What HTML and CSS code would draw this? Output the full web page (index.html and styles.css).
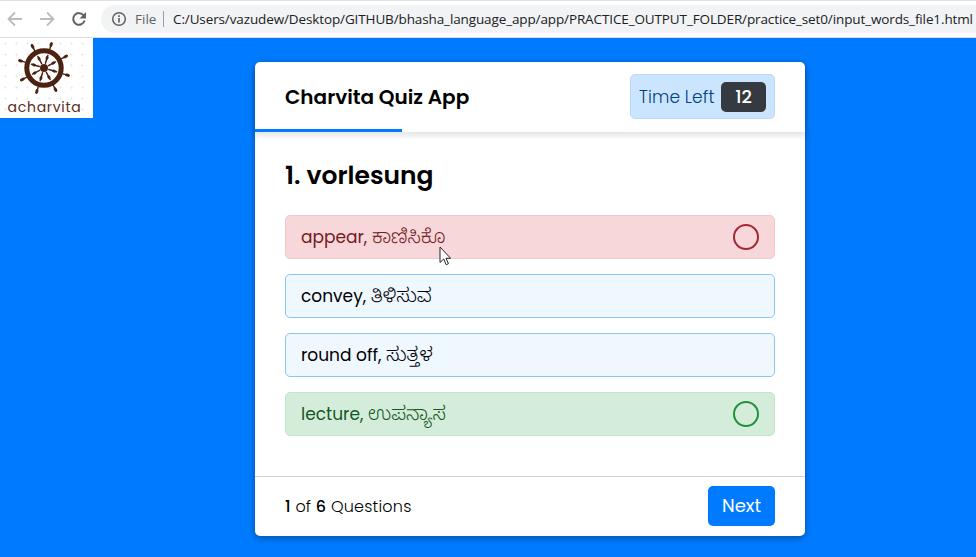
FILE: index.html
```html
<!DOCTYPE html>
<html lang="en">
<head>
<meta charset="utf-8">
<title>Charvita Quiz App</title>
<link rel="stylesheet" href="styles.css">
</head>
<body>
<header class="browser">
  <svg class="nav" viewBox="0 0 101 36" fill="none" stroke-width="1.8">
    <path stroke="#babcbe" d="M22 19H9M15 12.500 8.500 19l6.500 6.500M40 19h13M47 12.500l6.500 6.500-6.500 6.500"/>
    <path stroke="#5f6368" stroke-width="2" d="M83.700 15.500A5.800 5.800 0 1 0 84.600 20.500"/>
    <path fill="#5f6368" d="M86 12v6.500h-6.500z"/>
  </svg>
  <div class="address">
    <svg class="info" viewBox="0 0 16 16"><circle cx="8" cy="8" r="6.300" fill="none" stroke="#5f6368" stroke-width="1.500"/><path d="M8 7v4.500M8 4.300V6" stroke="#5f6368" stroke-width="1.700"/></svg>
    <span class="scheme">File</span>
    <span class="url">C:/Users/vazudew/Desktop/GITHUB/bhasha_language_app/app/PRACTICE_OUTPUT_FOLDER/practice_set0/input_words_file1.html</span>
  </div>
</header>
<main class="page">
  <div class="logo">
    <svg class="wheel" viewBox="0 0 56 54" fill="none" stroke="#4b2112">
      <circle cx="28" cy="28" r="17.200" stroke-width="5"/>
      <circle cx="28" cy="28" r="4" fill="#4b2112" stroke="none"/>
      <g stroke-linecap="round">
        <g id="pair" transform="rotate(17 28 28)">
          <path stroke-width="1.500" d="M28 8V2M28 48v6M8 28H2M48 28h6M28 23v-8M28 33v8M23 28h-8M33 28h8"/>
          <path stroke-width="2.800" d="M28 4.500V2.500M28 51.500V53.500M4.500 28H2.500M51.500 28H53.500M28 18v-1M28 38v1M18 28h-1M38 28h1"/>
        </g>
        <use href="#pair" transform="rotate(45 28 28)"/>
      </g>
    </svg>
    <span class="wordmark">acharvita</span>
  </div>
  <section class="quiz">
    <header class="quiz-head">
      <h1 class="title">Charvita Quiz App</h1>
      <div class="timer"><span class="timer-label">Time Left</span><span class="seconds">12</span></div>
      <div class="progress"></div>
    </header>
    <div class="body">
      <h2 class="question">1. vorlesung</h2>
      <div class="option wrong"><span class="w1">appear,</span><span class="kn">ಕಾಣಿಸಿಕೊ</span><i class="mark"></i></div>
      <div class="option"><span class="w2">convey,</span><span class="kn">ತಿಳಿಸುವ</span></div>
      <div class="option"><span class="w3">round off,</span><span class="kn">ಸುತ್ತಳ</span></div>
      <div class="option right"><span class="w4">lecture,</span><span class="kn">ಉಪನ್ಯಾಸ</span><i class="mark"></i></div>
    </div>
    <footer class="quiz-foot">
      <span class="count"><b>1</b> of <b>6</b> Questions</span>
      <button class="next">Next</button>
    </footer>
    <svg class="cursor" viewBox="0 0 12 20"><path d="M1 1v15.500l3.700-3.500 2.500 5.700 2.300-1-2.500-5.400h4.600z" fill="#fff" stroke="#222"/></svg>
  </section>
</main>
</body>
</html>
```
FILE: styles.css
```css
* { box-sizing: border-box; }
body { margin: 0; height: 557px; overflow: hidden; background: #007bff; font-family: "Poppins", "Lato", "Noto Sans Kannada", sans-serif; }
.browser { display: flex; height: 38px; padding-top: 5px; border-top: 1px solid #dee1e6; border-bottom: 1px solid #dadce0; background: #fff; }
.nav { width: 101px; height: 36px; margin-top: -6px; flex: none; }
.address { flex: 1; display: flex; align-items: center; height: 28px; margin-top: -1px; padding-left: 10px; border-radius: 14px 0 0 14px; background: #f1f3f4; font-family: "Open Sans", sans-serif; font-size: 13.500px; white-space: nowrap; overflow: hidden; }
.info { width: 16px; height: 16px; flex: none; }
.scheme { width: 28px; margin-left: 8px; height: 16px; line-height: 16px; color: #5f6368; border-right: 1px solid #9aa0a6; box-sizing: content-box; }
.url { margin-left: 9px; color: #202124; letter-spacing: -.12px; }
.page { position: relative; height: 519px; padding-top: 24px; background: #007bff; }
.logo { position: absolute; left: 0; top: 0; width: 93px; height: 80px; background: radial-gradient(circle, #eee 1px, #fff 1.200px) 0 0 / 11px 11px; text-align: center; }
.wheel { display: block; width: 56px; height: 54px; margin: 2px 0 0 16px; overflow: visible; }
.wordmark { display: block; width: 93px; margin: 4px 0 0 -2px; color: #5b2b20; font-size: 14px; line-height: 18px; letter-spacing: .7px; }
.quiz { position: relative; width: 550px; height: 474px; margin-left: 255px; display: flex; flex-direction: column; background: #fff; border-radius: 5px; box-shadow: 0 3px 6px rgba(0,0,0,.18), 0 1px 8px rgba(0,0,0,.17); }
.quiz-head { position: relative; height: 70px; flex: none; padding: 0 30px; display: flex; align-items: center; justify-content: space-between; border-radius: 5px 5px 0 0; box-shadow: 0 3px 5px 1px rgba(0,0,0,.1); }
.title { margin: 0; font-size: 20px; font-weight: 600; }
.timer { display: flex; align-items: center; justify-content: space-between; width: 145px; height: 45px; margin-top: -1px; padding: 0 8px; border: 1px solid #b8daff; border-radius: 5px; background: #cce5ff; color: #004085; }
.timer-label { font-size: 17px; font-weight: 300; letter-spacing: .1px; white-space: nowrap; }
.seconds { width: 45px; height: 30px; border-radius: 5px; background: #343a40; color: #fff; font-size: 18px; font-weight: 500; line-height: 30px; text-align: center; }
.progress { position: absolute; left: 0; bottom: 0; width: 147px; height: 3px; background: #007bff; }
.body { flex: 1; padding: 25px 30px 0; }
.question { margin: 0 0 20px; height: 38px; line-height: 38px; font-size: 25px; font-weight: 600; }
.option { display: flex; align-items: center; height: 44px; margin-bottom: 15px; padding: 0 15px; border: 1px solid #84c5fe; border-radius: 5px; background: #f0f8ff; font-size: 17px; white-space: nowrap; }
.wrong { color: #721c24; background: #f8d7da; border-color: #f5c6cb; }
.right { color: #155724; background: #d4edda; border-color: #c3e6cb; }
.kn { margin-top: 7px; font-family: "Noto Sans Kannada", "Lohit Kannada", sans-serif; font-size: 19.500px; font-weight: 300; line-height: 24px; }
.w1 { width: 71px; } .w2 { width: 70px; } .w3 { width: 85px; } .w4 { width: 67px; }
.mark { width: 26px; height: 26px; margin-left: auto; border: 2px solid #a42834; border-radius: 50%; }
.right .mark { border-color: #23903c; }
.quiz-foot { display: flex; align-items: center; justify-content: space-between; height: 60px; padding: 0 30px 2px; border-top: 1px solid #d3d3d3; }
.count { padding-top: 2px; font-size: 16px; font-weight: 300; letter-spacing: .2px; }
.count b { font-weight: 500; }
.next { width: 67px; height: 40px; padding: 0; border: 0; border-radius: 5px; background: #007bff; color: #fff; font-family: inherit; font-size: 18px; }
.cursor { position: absolute; left: 184px; top: 184px; width: 12px; height: 20px; }
```
